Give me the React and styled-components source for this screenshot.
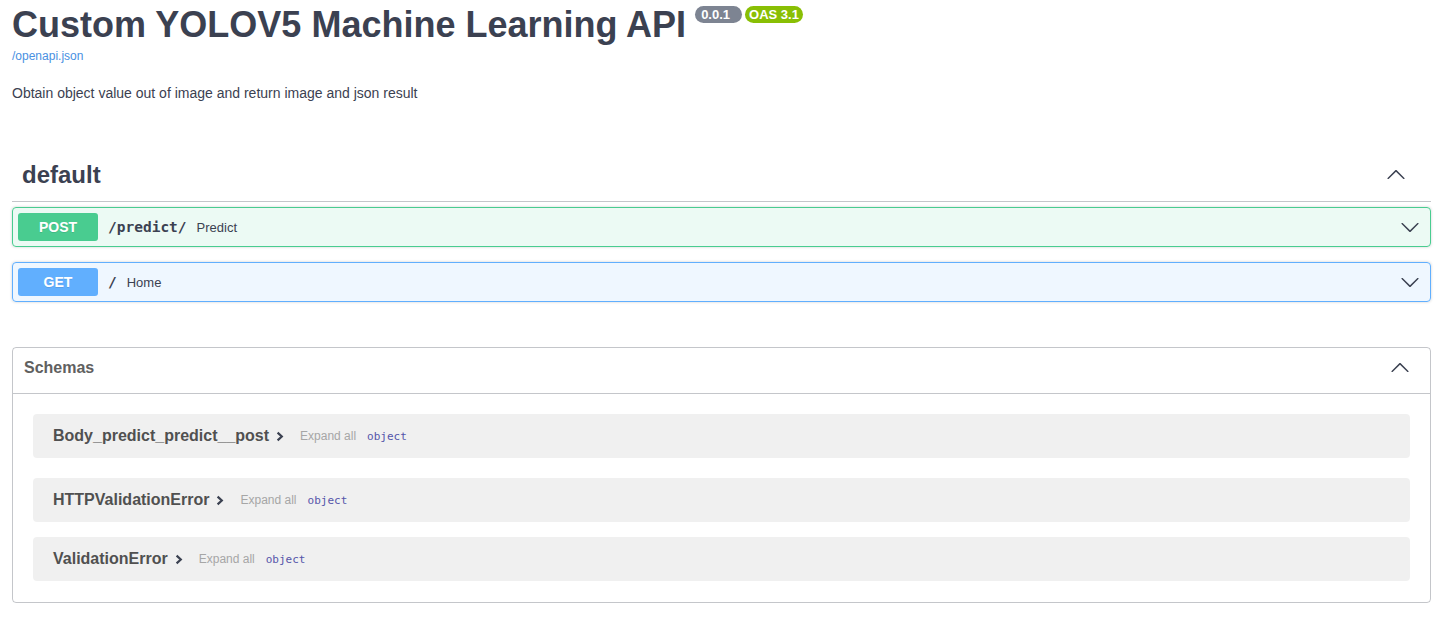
import React from 'react';
import styled, { createGlobalStyle, css } from 'styled-components';

const GlobalStyle = createGlobalStyle`
  body {
    margin: 0;
    background: #fff;
    font-family: "Liberation Sans", Arial, sans-serif;
    color: #3b4151;
  }
`;

const colorBase = {
  text: '#3b4151',
  border: 'rgba(59, 65, 81, 0.3)',
  post: '#49cc90',
  get: '#61affe',
};

const Page = styled.div`
  padding: 0 12px;
`;

const Info = styled.div`
  margin-bottom: 52px;
`;

const TitleRow = styled.div`
  display: flex;
  align-items: flex-start;
  padding-top: 6px;
`;

const Title = styled.h2`
  margin: 1px 0 0;
  font-size: 36px;
  line-height: 36px;
  font-weight: 700;
  color: ${colorBase.text};
`;

const Badge = styled.span`
  display: inline-block;
  margin-left: ${(p) => p.$gap}px;
  padding: 2px ${(p) => p.$pr}px 2px ${(p) => p.$pl}px;
  border-radius: 57px;
  background: ${(p) => p.$bg};
  color: #fff;
  font-size: 13px;
  line-height: 13px;
  font-weight: 700;
`;

const SpecLink = styled.a`
  display: block;
  margin-top: 6px;
  font-size: 12px;
  line-height: 14px;
  color: #4990e2;
  text-decoration: none;
`;

const Description = styled.p`
  margin: 22px 0 0;
  font-size: 14px;
  line-height: 16px;
  color: ${colorBase.text};
`;

const TagHeader = styled.div`
  display: flex;
  align-items: center;
  padding: 8px 25px 12px 10px;
  border-bottom: 1px solid ${colorBase.border};
  margin-bottom: 5px;
`;

const TagName = styled.h3`
  flex: 1;
  margin: 0;
  font-size: 24px;
  line-height: 28px;
  font-weight: 700;
  color: ${colorBase.text};
`;

const methodStyles = {
  post: css`
    background: rgba(73, 204, 144, 0.1);
    border-color: ${colorBase.post};
  `,
  get: css`
    background: rgba(97, 175, 254, 0.1);
    border-color: ${colorBase.get};
  `,
};

const OpBlock = styled.div`
  display: flex;
  align-items: center;
  padding: 5px;
  margin-bottom: 15px;
  border: 1px solid;
  border-radius: 4px;
  box-shadow: 0 0 3px rgba(0, 0, 0, 0.19);
  ${(p) => methodStyles[p.$method]}
`;

const Method = styled.span`
  min-width: 80px;
  padding: 6px 0;
  border-radius: 3px;
  background: ${(p) => colorBase[p.$method]};
  color: #fff;
  font-size: 14px;
  line-height: 16px;
  font-weight: 700;
  text-align: center;
  text-shadow: 0 1px 0 rgba(0, 0, 0, 0.1);
`;

const Path = styled.span`
  padding: 0 10px;
  font-family: "DejaVu Sans Mono", "Liberation Mono", monospace;
  font-size: 14.5px;
  font-weight: 700;
  color: ${colorBase.text};
`;

const Summary = styled.span`
  flex: 1;
  font-size: 13px;
  color: ${colorBase.text};
`;

const ArrowBox = styled.span`
  display: flex;
  margin-right: ${(p) => p.$mr || 0}px;
  color: ${colorBase.text};

  svg {
    transform: ${(p) => (p.$up ? 'rotate(180deg)' : 'none')};
  }
`;

const Models = styled.section`
  margin-top: 45px;
  border: 1px solid ${colorBase.border};
  border-radius: 4px;
  padding-bottom: 21px;
`;

const ModelsHeader = styled.h4`
  display: flex;
  align-items: center;
  margin: 0;
  padding: 8px 20px 13px 11px;
  border-bottom: 1px solid ${colorBase.border};
  font-size: 16px;
  line-height: 24px;
  font-weight: 700;
  color: #606060;
`;

const ModelsLabel = styled.span`
  flex: 1;
`;

const ModelContainer = styled.div`
  display: flex;
  align-items: center;
  height: 44px;
  margin: 0 20px 15px;
  padding: 0 20px;
  border-radius: 4px;
  background: rgba(0, 0, 0, 0.06);

  &:first-of-type {
    margin: 20px;
  }

  &:last-of-type {
    margin: 0 20px;
  }
`;

const ModelTitle = styled.span`
  font-size: 16px;
  font-weight: 700;
  color: #505050;
`;

const Toggle = styled.span`
  display: flex;
  margin: 1px 16px 0 7px;
  color: #3b4151;
`;

const ExpandAll = styled.span`
  font-size: 12px;
  color: #a6a6a6;
  margin-right: 11px;
`;

const PropType = styled.span`
  font-family: "DejaVu Sans Mono", "Liberation Mono", monospace;
  font-size: 11px;
  color: #55a;
`;

const Arrow = () => (
  <svg width="20" height="20" viewBox="0 0 20 20" fill="currentColor">
    <path d="M17.418 6.109c.272-.268.709-.268.979 0s.271.701 0 .969l-7.908 7.83c-.27.268-.707.268-.979 0l-7.908-7.83c-.27-.268-.27-.701 0-.969.271-.268.709-.268.979 0L10 13.25l7.418-7.141z" />
  </svg>
);

const SmallArrow = () => (
  <svg width="8" height="11" viewBox="0 0 8 11">
    <path d="M1.6 1.6 L5.8 5.5 L1.6 9.4" fill="none" stroke="currentColor" strokeWidth="2.2" />
  </svg>
);

const operations = [
  { method: 'post', path: '/predict/', summary: 'Predict' },
  { method: 'get', path: '/', summary: 'Home' },
];

const schemas = ['Body_predict_predict__post', 'HTTPValidationError', 'ValidationError'];

export default function App() {
  return (
    <Page>
      <GlobalStyle />
      <Info>
        <TitleRow>
          <Title>Custom YOLOV5 Machine Learning API</Title>
          <Badge $bg="#7d8492" $gap={9} $pl={6} $pr={12}>0.0.1</Badge>
          <Badge $bg="#89bf04" $gap={3} $pl={4} $pr={4}>OAS 3.1</Badge>
        </TitleRow>
        <SpecLink href="#">/openapi.json</SpecLink>
        <Description>Obtain object value out of image and return image and json result</Description>
      </Info>

      <TagHeader>
        <TagName>default</TagName>
        <ArrowBox $up><Arrow /></ArrowBox>
      </TagHeader>

      {operations.map((op) => (
        <OpBlock key={op.method} $method={op.method}>
          <Method $method={op.method}>{op.method.toUpperCase()}</Method>
          <Path>{op.path}</Path>
          <Summary>{op.summary}</Summary>
          <ArrowBox $mr={5}><Arrow /></ArrowBox>
        </OpBlock>
      ))}

      <Models>
        <ModelsHeader>
          <ModelsLabel>Schemas</ModelsLabel>
          <ArrowBox $up><Arrow /></ArrowBox>
        </ModelsHeader>
        {schemas.map((name) => (
          <ModelContainer key={name}>
            <ModelTitle>{name}</ModelTitle>
            <Toggle><SmallArrow /></Toggle>
            <ExpandAll>Expand all</ExpandAll>
            <PropType>object</PropType>
          </ModelContainer>
        ))}
      </Models>
    </Page>
  );
}
